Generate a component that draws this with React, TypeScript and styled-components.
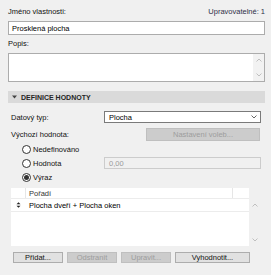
import React from "react";
import styled, { createGlobalStyle } from "styled-components";

const Global = createGlobalStyle`
  html, body { margin: 0; padding: 0; background: #f0f0f0; }
  body {
    font-family: "Liberation Sans", Arial, sans-serif;
    font-size: 7.5px;
    color: #111;
  }
  * { box-sizing: border-box; }
`;

const Panel = styled.div`
  width: 271px;
  height: 275px;
  padding: 6px 6px 0 8px;
  display: flex;
  flex-direction: column;
  overflow: hidden;
`;

const LabelRow = styled.div`
  display: flex;
  justify-content: space-between;
  align-items: center;
  height: 11px;
  line-height: 11px;
`;

const Label = styled.span<{ $muted?: boolean }>`
  color: ${(p) => (p.$muted ? "#2f2f48" : "#111")};
  white-space: nowrap;
`;

const TextBox = styled.div`
  margin-top: 4px;
  height: 14px;
  border: 1px solid #acacac;
  background: #fff;
  padding-left: 3px;
  display: flex;
  align-items: center;
  color: #000;
`;

const SubLabel = styled.div`
  margin-top: 3px;
  height: 11px;
  line-height: 11px;
`;

const TextArea = styled.div`
  margin-top: 4px;
  height: 29px;
  border: 1px solid #acacac;
  background: #fff;
  display: flex;
  justify-content: flex-end;
`;

const ScrollTrack = styled.div<{ $bg?: string }>`
  width: 11px;
  background: ${(p) => p.$bg || "#f2f2f2"};
  display: flex;
  flex-direction: column;
  justify-content: space-between;
  align-items: center;
  padding: 4px 0;
`;

const Arrow = ({ up }: { up?: boolean }) => (
  <svg width="6" height="4" viewBox="0 0 6 4">
    <path
      d={up ? "M0.5 3.5 L3 1 L5.5 3.5" : "M0.5 0.5 L3 3 L5.5 0.5"}
      fill="none"
      stroke="#b9b9b9"
      strokeWidth="0.9"
    />
  </svg>
);

const SectionHeader = styled.div`
  margin-top: 9px;
  height: 12px;
  background: #dadada;
  display: flex;
  align-items: center;
  padding-left: 4px;
  gap: 4px;
  font-weight: bold;
  color: #262626;
  font-size: 7px;
`;

const FieldRow = styled.div<{ $mt: number }>`
  margin-top: ${(p) => p.$mt}px;
  padding-left: 3px;
  display: grid;
  grid-template-columns: 93px 157px;
  align-items: center;
`;

const Select = styled.div`
  height: 12px;
  border: 1px solid #7a7a7a;
  background: #fff;
  display: flex;
  align-items: center;
  justify-content: space-between;
  padding: 0 3px 0 4px;
  color: #000;
`;

const GreyButton = styled.div<{ $disabled?: boolean }>`
  height: 13px;
  border: 1px solid ${(p) => (p.$disabled ? "#bfbfbf" : "#adadad")};
  background: ${(p) => (p.$disabled ? "#cccccc" : "#e1e1e1")};
  color: ${(p) => (p.$disabled ? "#9d9d9d" : "#111")};
  display: flex;
  align-items: center;
  justify-content: center;
  white-space: nowrap;
`;

const OptionsButton = styled(GreyButton)`
  margin-left: 42px;
  width: 114px;
`;

const RadioRow = styled.div<{ $mt?: number }>`
  margin-top: ${(p) => p.$mt || 0}px;
  height: 14px;
  display: grid;
  grid-template-columns: 82px 157px;
  align-items: center;
  padding-left: 14px;
`;

const RadioLabel = styled.label`
  display: flex;
  align-items: center;
  gap: 2px;
`;

const RadioCircle = styled.span<{ $on?: boolean }>`
  width: 9px;
  height: 9px;
  border-radius: 50%;
  border: 1px solid #333;
  background: #fff;
  display: flex;
  align-items: center;
  justify-content: center;
  &::after {
    content: "";
    width: 5px;
    height: 5px;
    border-radius: 50%;
    background: ${(p) => (p.$on ? "#333" : "transparent")};
  }
`;

const DisabledInput = styled.div`
  height: 12px;
  border: 1px solid #cccccc;
  background: #f0f0f0;
  color: #9a9a9a;
  padding-left: 4px;
  display: flex;
  align-items: center;
`;

const ListWrap = styled.div`
  margin-top: 4px;
  margin-left: 3px;
  height: 58px;
  display: flex;
`;

const ListBox = styled.div`
  width: 238px;
  background: #fff;
  display: flex;
  flex-direction: column;
`;

const ListHead = styled.div`
  height: 11px;
  display: grid;
  grid-template-columns: 15px 207px 1fr;
  border-bottom: 1px solid #ececec;
  & > span {
    border-right: 1px solid #e6e6e6;
    display: flex;
    align-items: center;
    padding-left: 3px;
    color: #333;
  }
  & > span:first-child {
    padding-left: 0;
  }
  & > span:last-child {
    border-right: none;
  }
`;

const ListRow = styled.div`
  height: 13px;
  display: grid;
  grid-template-columns: 15px 1fr;
  align-items: center;
  border-bottom: 1px solid #ececec;
  color: #000;
  & > span:last-child {
    padding-left: 3px;
  }
`;

const DragIcon = styled.span`
  display: flex;
  justify-content: center;
`;

const ListScroll = styled(ScrollTrack)`
  margin-top: 11px;
  width: 12px;
`;

const ButtonBar = styled.div`
  margin-top: 6px;
  margin-left: 5px;
  display: flex;
  gap: 4px;
`;

const Btn = styled(GreyButton)<{ $w: number }>`
  width: ${(p) => p.$w}px;
  height: 11px;
`;

export default function App() {
  return (
    <>
      <Global />
      <Panel>
        <LabelRow>
          <Label>Jméno vlastnosti:</Label>
          <Label $muted>Upravovatelné: 1</Label>
        </LabelRow>
        <TextBox>Prosklená plocha</TextBox>
        <SubLabel>Popis:</SubLabel>
        <TextArea>
          <ScrollTrack>
            <Arrow up />
            <Arrow />
          </ScrollTrack>
        </TextArea>
        <SectionHeader>
          <svg width="5" height="4" viewBox="0 0 5 4">
            <path d="M0 0.5 H5 L2.5 3.5 Z" fill="#444" />
          </svg>
          <span>DEFINICE HODNOTY</span>
        </SectionHeader>
        <FieldRow $mt={8}>
          <Label>Datový typ:</Label>
          <Select>
            <span>Plocha</span>
            <svg width="6" height="4" viewBox="0 0 6 4">
              <path d="M0.5 0.5 L3 3 L5.5 0.5" fill="none" stroke="#555" strokeWidth="0.9" />
            </svg>
          </Select>
        </FieldRow>
        <FieldRow $mt={5}>
          <Label>Výchozí hodnota:</Label>
          <OptionsButton $disabled>Nastavení voleb...</OptionsButton>
        </FieldRow>
        <RadioRow $mt={1}>
          <RadioLabel>
            <RadioCircle />
            Nedefinováno
          </RadioLabel>
        </RadioRow>
        <RadioRow>
          <RadioLabel>
            <RadioCircle />
            Hodnota
          </RadioLabel>
          <DisabledInput>0,00</DisabledInput>
        </RadioRow>
        <RadioRow>
          <RadioLabel>
            <RadioCircle $on />
            Výraz
          </RadioLabel>
        </RadioRow>
        <ListWrap>
          <ListBox>
            <ListHead>
              <span />
              <span>Pořadí</span>
              <span />
            </ListHead>
            <ListRow>
              <DragIcon>
                <svg width="5" height="6" viewBox="0 0 5 6">
                  <path d="M0.5 2.2 L2.5 0.3 L4.5 2.2 Z M0.5 3.8 L2.5 5.7 L4.5 3.8 Z" fill="#222" />
                </svg>
              </DragIcon>
              <span>Plocha dveří + Plocha oken</span>
            </ListRow>
          </ListBox>
          <ListScroll $bg="#f0f0f0">
            <Arrow up />
            <Arrow />
          </ListScroll>
        </ListWrap>
        <ButtonBar>
          <Btn $w={50}>Přidat...</Btn>
          <Btn $w={50} $disabled>Odstranit</Btn>
          <Btn $w={50} $disabled>Upravit...</Btn>
          <Btn $w={75}>Vyhodnotit...</Btn>
        </ButtonBar>
      </Panel>
    </>
  );
}
